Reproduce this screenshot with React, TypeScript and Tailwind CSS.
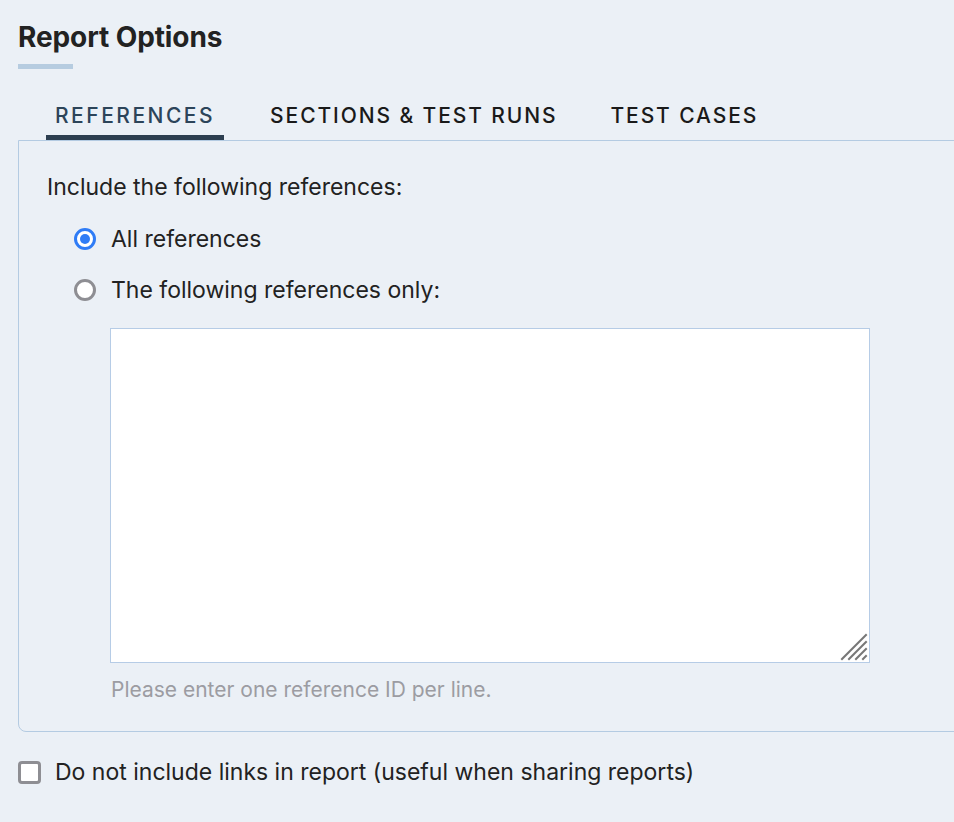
import React from "react";

export default function App() {
  return (
    <div className="min-h-screen w-full overflow-hidden bg-[#ebf0f6] font-['Inter',sans-serif] text-[#222]">
      <div className="pl-[18px] pt-[20px]">
        <h1 className="text-[28px] font-bold leading-[34px] tracking-[-0.1px] text-[#222]">Report Options</h1>
        <div className="mt-[10px] h-[5px] w-[55px] bg-[#b6cce0]" />

        <div className="mt-[32px] flex gap-[37px] pl-[28px]">
          <div className="border-b-[5px] border-[#2c3e50] px-[9px] pb-[4px] text-[21px] font-medium leading-[30px] tracking-[2.5px] text-[#2c4459]">
            REFERENCES
          </div>
          <div className="border-b-[5px] border-transparent px-[9px] pb-[4px] text-[21px] font-medium leading-[30px] tracking-[1.9px] text-[#1a1a1a]">
            SECTIONS &amp; TEST RUNS
          </div>
          <div className="-ml-[2px] border-b-[5px] border-transparent px-[9px] pb-[4px] text-[21px] font-medium leading-[30px] tracking-[1.9px] text-[#1a1a1a]">
            TEST CASES
          </div>
        </div>

        <div className="w-[1000px] rounded-bl-[8px] border border-[#b4cbe2] pb-[26px] pl-[28px] pt-[31px]">
          <div className="text-[23px] leading-[30px] text-[#222]">Include the following references:</div>

          <div className="mt-[22px] flex items-center pl-[27px]">
            <span className="flex h-[22px] w-[22px] items-center justify-center rounded-full border-[3px] border-[#2f7cf6] bg-white">
              <span className="h-[10px] w-[10px] rounded-full bg-[#2f7cf6]" />
            </span>
            <span className="ml-[15px] text-[23px] leading-[30px]">All references</span>
          </div>

          <div className="mt-[21px] flex items-center pl-[27px]">
            <span className="h-[22px] w-[22px] rounded-full border-[3px] border-[#8e8e93] bg-white" />
            <span className="ml-[15px] text-[23px] leading-[30px]">The following references only:</span>
          </div>

          <div className="relative ml-[63px] mt-[23px] h-[335px] w-[760px]">
            <textarea className="block h-full w-full resize-none border border-[#b6cce6] bg-white outline-none" />
            <svg className="pointer-events-none absolute bottom-[2px] right-[2px]" width="28" height="28" viewBox="0 0 28 28">
              <g stroke="#777" strokeWidth="2" strokeLinecap="square">
                <line x1="2" y1="26" x2="26" y2="2" />
                <line x1="9" y1="26" x2="26" y2="9" />
                <line x1="16" y1="26" x2="26" y2="16" />
                <line x1="23" y1="26" x2="26" y2="23" />
              </g>
            </svg>
          </div>

          <div className="ml-[64px] mt-[12px] text-[21px] leading-[30px] text-[#9c9ca2]">
            Please enter one reference ID per line.
          </div>
        </div>

        <div className="mt-[25px] flex items-center">
          <span className="h-[23px] w-[23px] rounded-[4px] border-[3px] border-[#8e8e93] bg-white" />
          <span className="ml-[14px] text-[23px] leading-[30px]">Do not include links in report (useful when sharing reports)</span>
        </div>
      </div>
    </div>
  );
}
